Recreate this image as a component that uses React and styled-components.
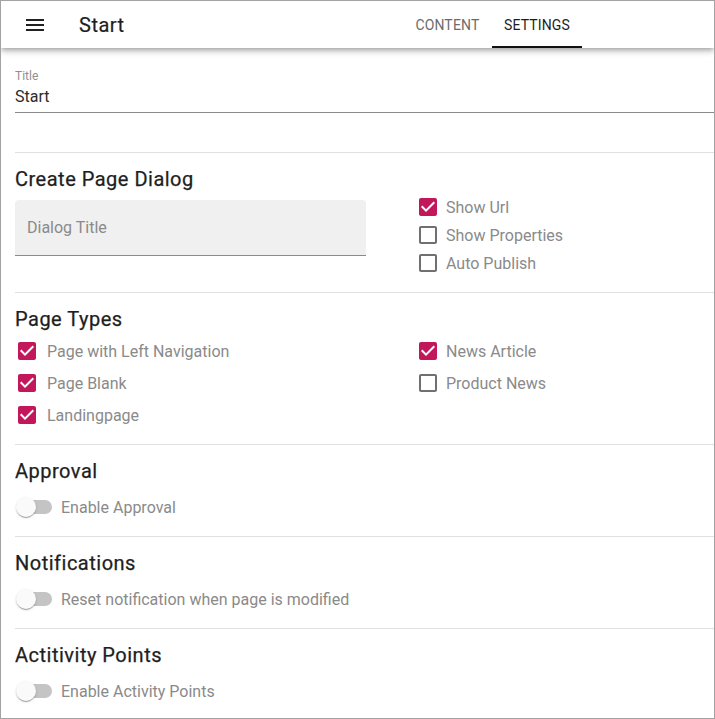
import React from "react";
import styled, { createGlobalStyle } from "styled-components";

const Global = createGlobalStyle`
  html, body { margin: 0; padding: 0; background: #fff; }
  body { font-family: Roboto, "Noto Sans", "Liberation Sans", sans-serif; }
  * { box-sizing: border-box; }
`;

const ACCENT = "#c2185b";

const Frame = styled.div`
  width: 715px;
  height: 719px;
  border: 1px solid #a3a3a3;
  overflow: hidden;
  background: #fff;
  display: flex;
  flex-direction: column;
`;

const Header = styled.header`
  position: relative;
  z-index: 2;
  height: 47px;
  flex: none;
  display: flex;
  align-items: center;
  padding: 0 132px 0 22px;
  background: #fff;
  box-shadow: 0 2px 4px -1px rgba(0,0,0,0.2), 0 4px 5px 0 rgba(0,0,0,0.14), 0 1px 10px 0 rgba(0,0,0,0.12);
`;

const IconButton = styled.button`
  border: 0;
  background: none;
  padding: 0;
  width: 24px;
  height: 24px;
  display: flex;
  color: #212121;
  margin-right: 32px;
`;

const HeaderTitle = styled.h1`
  margin: 0;
  font-size: 20px;
  font-weight: 400;
  letter-spacing: 0.5px;
  color: #1e1e1e;
  -webkit-text-stroke: 0.2px #1e1e1e;
  flex: 1;
`;

const Tabs = styled.nav`
  display: flex;
  height: 100%;
`;

const Tab = styled.div`
  position: relative;
  height: 100%;
  min-width: 89px;
  padding: 0 12px;
  display: flex;
  align-items: center;
  justify-content: center;
  font-size: 14px;
  font-weight: 400;
  letter-spacing: 0.15px;
  text-transform: uppercase;
  color: ${p => (p.$active ? "#1e1e1e" : "#6b6b6b")};
  &::after {
    content: "";
    display: ${p => (p.$active ? "block" : "none")};
    position: absolute;
    left: 0;
    right: 0;
    bottom: 0;
    height: 2px;
    background: #111;
  }
`;

const Content = styled.main`
  flex: 1;
  padding-left: 14px;
`;

const TitleField = styled.div`
  padding: 20px 0 39px;
  border-bottom: 1px solid #e0e0e0;
`;

const FieldLabel = styled.label`
  display: block;
  font-size: 12px;
  line-height: 16px;
  color: #8f8f8f;
`;

const FieldValue = styled.div`
  font-size: 16px;
  line-height: 19px;
  padding: 3px 0 6px;
  color: #2b2b2b;
  border-bottom: 1px solid #8a8a8a;
`;

const Section = styled.section`
  padding: 12px 0 ${p => p.$pb || 13}px;
  border-bottom: ${p => (p.$last ? "none" : "1px solid #e0e0e0")};
`;

const Heading = styled.h2`
  margin: 0 0 ${p => p.$mb || 0}px;
  font-size: 20px;
  font-weight: 400;
  line-height: 28px;
  letter-spacing: 0.5px;
  color: #1e1e1e;
  -webkit-text-stroke: 0.25px #1e1e1e;
`;

const Columns = styled.div`
  display: grid;
  grid-template-columns: 401px 1fr;
  align-items: start;
`;

const FilledField = styled.div`
  margin-top: 7px;
  width: 351px;
  height: 56px;
  background: #f0f0f0;
  border-radius: 4px 4px 0 0;
  border-bottom: 1px solid #8a8a8a;
  display: flex;
  align-items: center;
  padding: 0 12px;
  font-size: 16px;
  color: #8a8a8a;
`;

const Stack = styled.div`
  display: flex;
  flex-direction: column;
`;

const CheckRow = styled.label`
  display: flex;
  align-items: center;
  gap: ${p => p.$gap}px;
  height: ${p => p.$h}px;
  font-size: 16px;
  color: #8a8a8a;
`;

const CheckIcon = styled.svg`
  width: 24px;
  height: 24px;
  flex: none;
  fill: ${p => (p.$checked ? ACCENT : "#707070")};
`;

const SwitchRow = styled.div`
  margin-top: 6px;
  height: 32px;
  display: flex;
  align-items: center;
  font-size: 16px;
  color: #8a8a8a;
`;

const SwitchBox = styled.span`
  position: relative;
  width: 37px;
  height: 20px;
  margin-right: 9px;
  flex: none;
`;

const Track = styled.span`
  position: absolute;
  left: 3px;
  top: 3px;
  width: 34px;
  height: 14px;
  border-radius: 7px;
  background: #c4c4c4;
`;

const Thumb = styled.span`
  position: absolute;
  left: 1px;
  top: 0;
  width: 20px;
  height: 20px;
  border-radius: 50%;
  background: #fafafa;
  box-shadow: 0 2px 1px -1px rgba(0,0,0,0.2), 0 1px 1px 0 rgba(0,0,0,0.14), 0 1px 3px 0 rgba(0,0,0,0.12);
`;

const Checkbox = ({ checked, label, h = 32, gap = 7 }) => (
  <CheckRow $h={h} $gap={gap}>
    <CheckIcon viewBox="0 0 24 24" $checked={checked}>
      {checked ? (
        <path d="M19 3H5c-1.11 0-2 .9-2 2v14c0 1.1.89 2 2 2h14c1.11 0 2-.9 2-2V5c0-1.1-.89-2-2-2zm-9 14l-5-5 1.41-1.41L10 14.17l7.59-7.59L19 8l-9 9z" />
      ) : (
        <path d="M19 5v14H5V5h14m0-2H5c-1.1 0-2 .9-2 2v14c0 1.1.9 2 2 2h14c1.1 0 2-.9 2-2V5c0-1.1-.9-2-2-2z" />
      )}
    </CheckIcon>
    {label}
  </CheckRow>
);

const Switch = ({ label }) => (
  <SwitchRow>
    <SwitchBox>
      <Track />
      <Thumb />
    </SwitchBox>
    {label}
  </SwitchRow>
);

export default function App() {
  return (
    <>
      <Global />
      <Frame>
        <Header>
          <IconButton aria-label="menu">
            <svg viewBox="0 0 24 24" width="24" height="24" fill="#212121">
              <path d="M3 18h18v-2H3v2zm0-5h18v-2H3v2zm0-7v2h18V6H3z" />
            </svg>
          </IconButton>
          <HeaderTitle>Start</HeaderTitle>
          <Tabs>
            <Tab>Content</Tab>
            <Tab $active>Settings</Tab>
          </Tabs>
        </Header>
        <Content>
          <TitleField>
            <FieldLabel>Title</FieldLabel>
            <FieldValue>Start</FieldValue>
          </TitleField>

          <Section $pb={15}>
            <Heading>Create Page Dialog</Heading>
            <Columns>
              <FilledField>Dialog Title</FilledField>
              <Stack>
                <Checkbox checked label="Show Url" h={28} gap={6} />
                <Checkbox label="Show Properties" h={28} gap={6} />
                <Checkbox label="Auto Publish" h={28} gap={6} />
              </Stack>
            </Columns>
          </Section>

          <Section>
            <Heading $mb={2}>Page Types</Heading>
            <Columns>
              <Stack>
                <Checkbox checked label="Page with Left Navigation" gap={8} />
                <Checkbox checked label="Page Blank" gap={8} />
                <Checkbox checked label="Landingpage" gap={8} />
              </Stack>
              <Stack>
                <Checkbox checked label="News Article" gap={6} />
                <Checkbox label="Product News" gap={6} />
              </Stack>
            </Columns>
          </Section>

          <Section>
            <Heading>Approval</Heading>
            <Switch label="Enable Approval" />
          </Section>

          <Section>
            <Heading>Notifications</Heading>
            <Switch label="Reset notification when page is modified" />
          </Section>

          <Section $last>
            <Heading>Actitivity Points</Heading>
            <Switch label="Enable Activity Points" />
          </Section>
        </Content>
      </Frame>
    </>
  );
}
